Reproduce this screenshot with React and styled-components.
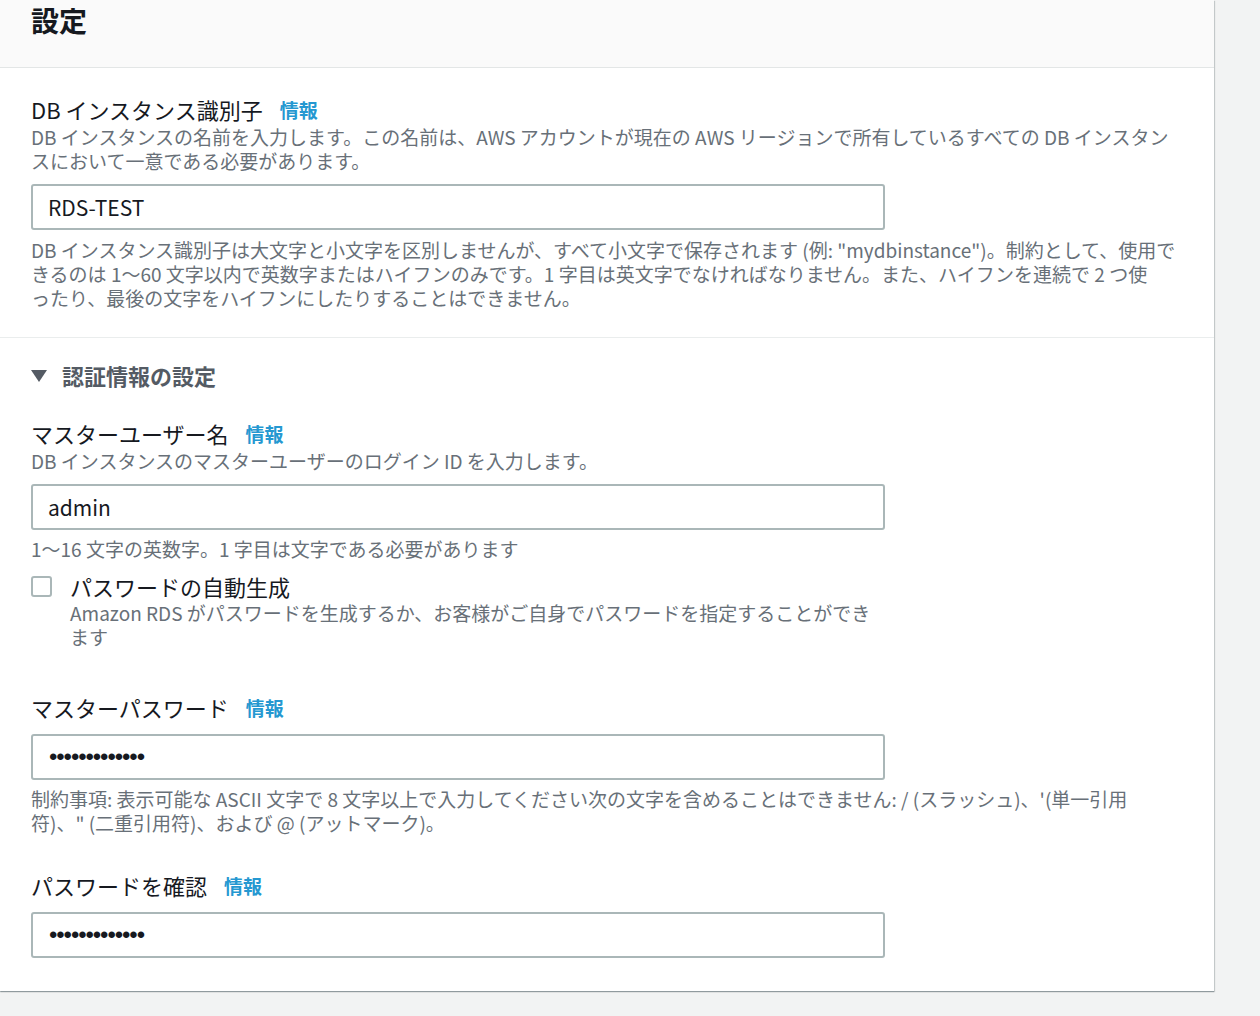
import styled, { createGlobalStyle } from "styled-components"

const GlobalStyle = createGlobalStyle`
    html, body {
        margin: 0;
        padding: 0;
        background: #f2f3f3;
        font-family: "Noto Sans CJK JP", "Noto Sans", sans-serif;
        color: #16191f;
    }
`
const Page = styled.div`
    width: 1260px;
    height: 1016px;
    overflow: hidden;
`
const Card = styled.div`
    width: 1214px;
    background: #ffffff;
    box-shadow: 0 1px 1px 0 rgba(0, 28, 36, 0.3), 1px 1px 1px 0 rgba(0, 28, 36, 0.15);
`
const Header = styled.div`
    height: 68px;
    box-sizing: border-box;
    padding: 3px 31px 0;
    background: #fafafa;
    border-bottom: 1px solid #e3e6e6;
`
const Title = styled.h2`
    margin: 0;
    font-size: 28px;
    line-height: 34px;
    font-weight: 700;
    color: #16191f;
`
const Section = styled.div`
    padding: ${(p) => p.$pad};
    border-bottom: ${(p) => (p.$divider ? "1px solid #eaeded" : "none")};
`
const Expander = styled.div`
    display: flex;
    align-items: center;
    gap: 15px;
    height: 28px;
    font-size: 22px;
    font-weight: 700;
    color: #545b64;
`
const Caret = styled.span`
    width: 0;
    height: 0;
    border-left: 8px solid transparent;
    border-right: 8px solid transparent;
    border-top: 12px solid #545b64;
    margin-top: 2px;
`
const Field = styled.div`
    margin-top: ${(p) => p.$top || 0}px;
`
const LabelRow = styled.div`
    display: flex;
    align-items: center;
    gap: 17px;
    height: 28px;
    font-size: 22px;
    line-height: 28px;
    color: #16191f;
`
const Info = styled.a`
    font-size: 19px;
    font-weight: 700;
    color: #2598d1;
    text-decoration: none;
    padding-top: 2px;
`
const Desc = styled.div`
    margin-top: ${(p) => p.$top || 0}px;
    font-size: 19px;
    line-height: 24px;
    color: #687078;
    max-width: ${(p) => p.$max || "none"};
`
const Line = styled.span`
    display: block;
    white-space: nowrap;
`
const Input = styled.input`
    display: block;
    box-sizing: border-box;
    width: 854px;
    height: 46px;
    margin-top: ${(p) => p.$top || 0}px;
    padding: 0 15px;
    border: 2px solid #aab7b8;
    border-radius: 3px;
    background: #fff;
    font-family: "Noto Sans CJK JP", "Noto Sans", sans-serif;
    font-size: 21px;
    color: #16191f;
    outline: none;
`
const Secret = styled.div`
    display: flex;
    align-items: center;
    box-sizing: border-box;
    width: 854px;
    height: 46px;
    margin-top: ${(p) => p.$top || 0}px;
    padding: 0 15px 0 16px;
    border: 2px solid #aab7b8;
    border-radius: 3px;
    background: #fff;
    font-family: "Liberation Sans", sans-serif;
    font-size: 24px;
    letter-spacing: -1.1px;
    color: #16191f;
`
const CheckRow = styled.div`
    display: flex;
    gap: 18px;
    margin-top: 11px;
    width: 854px;
`
const Box = styled.span`
    flex: none;
    width: 21px;
    height: 21px;
    box-sizing: border-box;
    margin-top: 4px;
    border: 2px solid #aab7b8;
    border-radius: 3px;
    background: #fff;
`
const CheckText = styled.div`
    font-size: 22px;
    line-height: 28px;
    color: #16191f;
`

const Label = ({ children }) => (
    <LabelRow>
        <span>{children}</span>
        <Info href="#">情報</Info>
    </LabelRow>
)

const dots = "•".repeat(13)

const App = () => {
    return (
        <>
            <GlobalStyle />
            <Page>
                <Card>
                    <Header>
                        <Title>設定</Title>
                    </Header>
                    <Section $divider $pad="27px 31px 27px">
                        <Label>DB インスタンス識別子</Label>
                        <Desc $top={2}>
                            <Line>DB インスタンスの名前を入力します。この名前は、AWS アカウントが現在の AWS リージョンで所有しているすべての DB インスタン</Line>
                            <Line>スにおいて一意である必要があります。</Line>
                        </Desc>
                        <Input $top={11} readOnly value="RDS-TEST" />
                        <Desc $top={8}>
                            <Line>DB インスタンス識別子は大文字と小文字を区別しませんが、すべて小文字で保存されます (例: "mydbinstance")。制約として、使用で</Line>
                            <Line>きるのは 1〜60 文字以内で英数字またはハイフンのみです。1 字目は英文字でなければなりません。また、ハイフンを連続で 2 つ使</Line>
                            <Line>ったり、最後の文字をハイフンにしたりすることはできません。</Line>
                        </Desc>
                    </Section>
                    <Section $pad="23px 31px 33px">
                        <Expander>
                            <Caret />
                            <span>認証情報の設定</span>
                        </Expander>
                        <Field $top={30}>
                            <Label>マスターユーザー名</Label>
                            <Desc $top={2}>DB インスタンスのマスターユーザーのログイン ID を入力します。</Desc>
                            <Input $top={11} readOnly value="admin" />
                            <Desc $top={7}>1〜16 文字の英数字。1 字目は文字である必要があります</Desc>
                        </Field>
                        <CheckRow>
                            <Box />
                            <div>
                                <CheckText>パスワードの自動生成</CheckText>
                                <Desc $top={1} $max="830px">
                                    Amazon RDS がパスワードを生成するか、お客様がご自身でパスワードを指定することができます
                                </Desc>
                            </div>
                        </CheckRow>
                        <Field $top={44}>
                            <Label>マスターパスワード</Label>
                            <Secret $top={13}>{dots}</Secret>
                            <Desc $top={7}>
                                <Line>制約事項: 表示可能な ASCII 文字で 8 文字以上で入力してください次の文字を含めることはできません: / (スラッシュ)、'(単一引用</Line>
                                <Line>符)、" (二重引用符)、および @ (アットマーク)。</Line>
                            </Desc>
                        </Field>
                        <Field $top={36}>
                            <Label>パスワードを確認</Label>
                            <Secret $top={13}>{dots}</Secret>
                        </Field>
                    </Section>
                </Card>
            </Page>
        </>
    )
}

export default App
